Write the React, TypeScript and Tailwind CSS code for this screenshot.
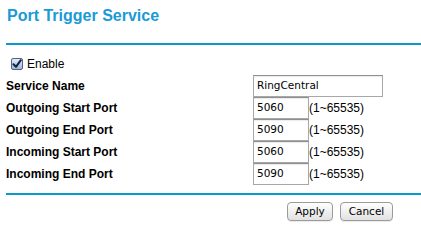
import React from "react";

const rows = [
  { label: "Outgoing Start Port", value: "5060" },
  { label: "Outgoing End Port", value: "5090" },
  { label: "Incoming Start Port", value: "5060" },
  { label: "Incoming End Port", value: "5090" },
];

function Field({ value, w }: { value: string; w: string }) {
  return (
    <div
      className={`${w} h-[22px] border border-[#a8a8a8] border-t-[#8f8f8f] bg-white flex items-center pl-[3px] text-[10.5px] font-['DejaVu_Sans',sans-serif] text-black shadow-[inset_0_1px_1px_rgba(0,0,0,0.08)]`}
    >
      {value}
    </div>
  );
}

export default function App() {
  return (
    <div className="w-[421px] h-[241px] bg-white text-black text-[12px] font-['Liberation_Sans',Arial,sans-serif] flex flex-col">
      <h1 className="pl-[7px] pt-[7px] text-[16px] leading-[18px] font-bold text-[#1a9ad6]">
        Port Trigger Service
      </h1>
      <div className="ml-[6px] mt-[18px] h-[2px] bg-[#0a99cc]" />
      <div className="mt-[12px] h-[14px] pl-[11px] flex items-center gap-[4px]">
        <span className="w-[12px] h-[12px] rounded-[2px] border border-[#4f6488] bg-linear-to-b from-[#e3ecf8] to-[#9fb7da] flex items-center justify-center">
          <svg width="10" height="10" viewBox="0 0 10 10">
            <path d="M1.5 5.2 L4 7.8 L8.8 1.2" fill="none" stroke="#14213d" strokeWidth="2" strokeLinecap="round" strokeLinejoin="round" />
          </svg>
        </span>
        <span>Enable</span>
      </div>
      <div className="mt-[4px] flex flex-col">
        <div className="h-[22px] flex items-center">
          <div className="w-[253px] pl-[6px] font-bold pb-[1px]">Service Name</div>
          <Field value="RingCentral" w="w-[130px]" />
        </div>
        {rows.map((r) => (
          <div key={r.label} className="h-[22px] flex items-center">
            <div className="w-[253px] pl-[6px] font-bold pb-[1px]">{r.label}</div>
            <Field value={r.value} w="w-[56px]" />
            <span>(1~65535)</span>
          </div>
        ))}
      </div>
      <div className="ml-[6px] mt-[8px] h-[2px] bg-[#0a99cc]" />
      <div className="mt-[7px] flex justify-end pr-[28px] gap-[7px] font-['DejaVu_Sans',sans-serif] text-[10.5px]">
        <button className="w-[46px] h-[19px] rounded-[4px] border border-[#9b9b9b] bg-linear-to-b from-white to-[#e2e2e2] shadow-[0_1px_0_rgba(0,0,0,0.08)] text-black">
          Apply
        </button>
        <button className="w-[53px] h-[19px] rounded-[4px] border border-[#9b9b9b] bg-linear-to-b from-white to-[#e2e2e2] shadow-[0_1px_0_rgba(0,0,0,0.08)] text-black">
          Cancel
        </button>
      </div>
    </div>
  );
}
